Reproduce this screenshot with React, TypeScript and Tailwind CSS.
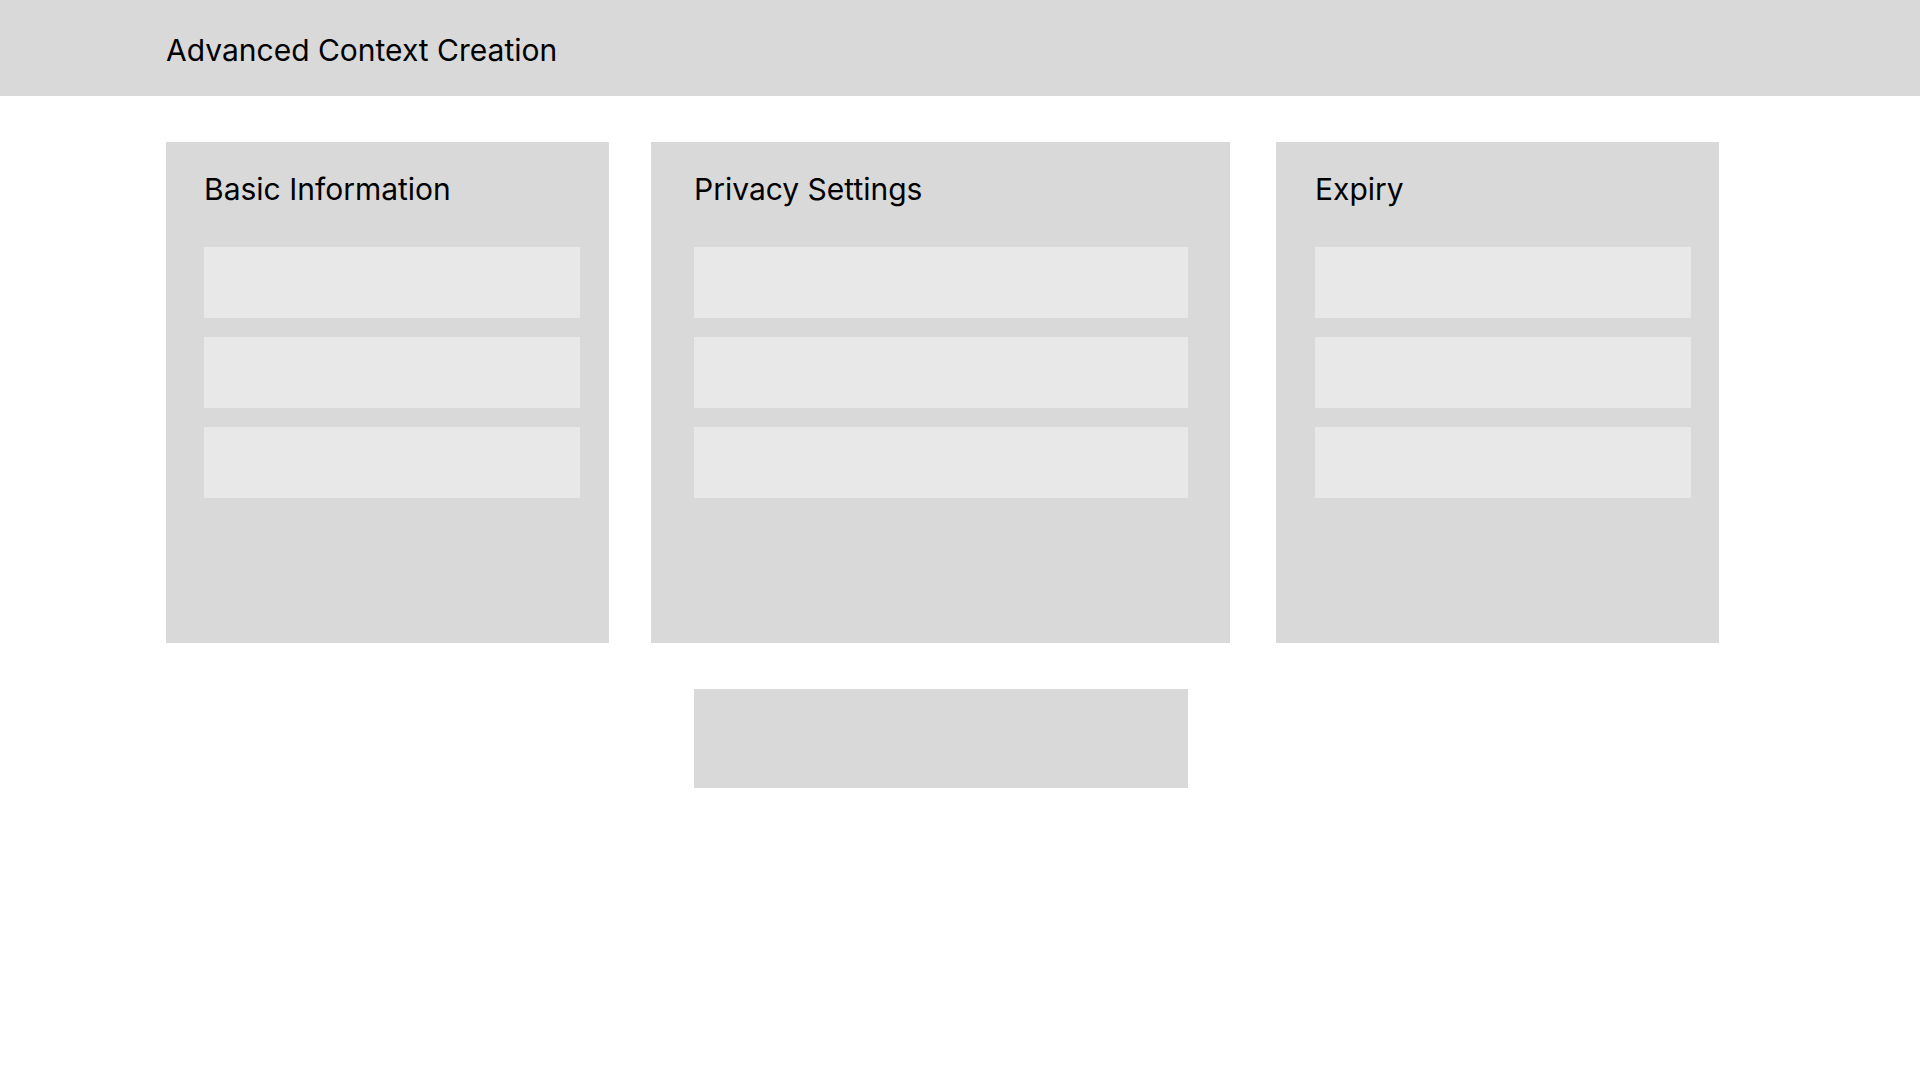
import React from 'react';

interface Section {
  title: string;
  width: string;
  pad: string;
  field: string;
  gap: string;
}

const sections: Section[] = [
  { title: 'Basic Information', width: 'w-[443px]', pad: 'pl-[38px]', field: 'w-[376px]', gap: '' },
  { title: 'Privacy Settings', width: 'w-[579px]', pad: 'pl-[43px]', field: 'w-[494px]', gap: 'ml-[42px]' },
  { title: 'Expiry', width: 'w-[443px]', pad: 'pl-[39px]', field: 'w-[376px]', gap: 'ml-[46px]' },
];

function SectionCard({ section }: { section: Section }) {
  return (
    <div className={`${section.width} ${section.pad} ${section.gap} h-[501px] bg-[#d9d9d9] pt-[29px] flex flex-col`}>
      <h2 className="text-[30px] leading-[36px] font-normal text-black">{section.title}</h2>
      {/* placeholder fields */}
      <div className="mt-[40px] flex flex-col gap-[19px]">
        <div className={`${section.field} h-[71px] bg-[#e8e8e8]`} />
        <div className={`${section.field} h-[71px] bg-[#e8e8e8]`} />
        <div className={`${section.field} h-[71px] bg-[#e8e8e8]`} />
      </div>
    </div>
  );
}

export default function App() {
  return (
    <div className="min-h-screen w-full bg-white font-['Inter',sans-serif] text-black">
      <header className="h-[96px] bg-[#d9d9d9] pl-[166px] pt-[32px]">
        <h1 className="text-[30px] leading-[36px] font-normal">Advanced Context Creation</h1>
      </header>

      <main className="pl-[166px] pt-[46px]">
        <div className="flex">
          {sections.map((s) => (
            <SectionCard key={s.title} section={s} />
          ))}
        </div>

        <div className="mt-[46px] ml-[528px] w-[494px] h-[99px] bg-[#d9d9d9]" />
      </main>
    </div>
  );
}
